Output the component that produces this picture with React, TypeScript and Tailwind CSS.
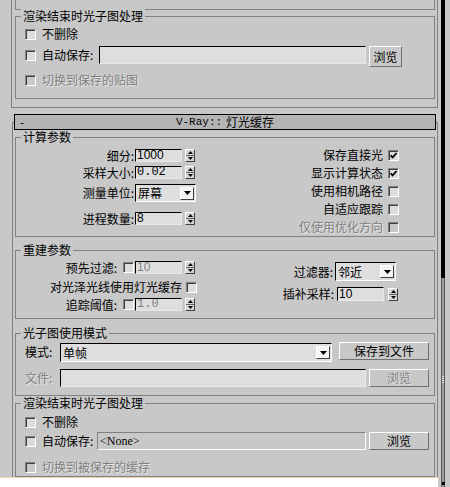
import React from "react";

const DIS = "text-[#808080] [text-shadow:1px_1px_0_#e6e6e6]";

function Check({ checked = false, disabled = false }: { checked?: boolean; disabled?: boolean }) {
  return (
    <div
      className={
        "w-[11px] h-[11px] shrink-0 border border-t-[#808080] border-l-[#808080] border-b-white border-r-white shadow-[inset_1px_1px_0_#404040] flex items-center justify-center " +
        (disabled ? "bg-[#c8c8c8]" : "bg-[#dcdcdc]")
      }
    >
      {checked && (
        <svg width="9" height="9" viewBox="0 0 9 9" className="block">
          <path d="M1.6 4.2 L3.6 6.4 L7.6 2" stroke="#000" strokeWidth="1.7" fill="none" />
        </svg>
      )}
    </div>
  );
}

function Spin() {
  return (
    <div className="w-[10px] h-[13px] shrink-0 flex flex-col border border-t-white border-l-white border-b-[#404040] border-r-[#404040] bg-[#d6d6d6]">
      <div className="h-[5px] flex items-center justify-center">
        <svg width="5" height="3" viewBox="0 0 5 3" className="block">
          <path d="M2.5 0L5 3H0Z" fill="#000" />
        </svg>
      </div>
      <div className="h-px bg-[#606060]" />
      <div className="h-[5px] flex items-center justify-center">
        <svg width="5" height="3" viewBox="0 0 5 3" className="block">
          <path d="M0 0H5L2.5 3Z" fill="#000" />
        </svg>
      </div>
    </div>
  );
}

function Field({ className = "", disabled = false, children }: { className?: string; disabled?: boolean; children?: React.ReactNode }) {
  return (
    <div
      className={
        "shrink-0 flex items-center overflow-hidden border border-t-black border-l-black border-b-[#e8e8e8] border-r-[#e8e8e8] bg-[#dedede] pl-[1px] " +
        className +
        (disabled ? " text-[#808080]" : "")
      }
    >
      {children}
    </div>
  );
}

function Num({ children, mono = false }: { children: React.ReactNode; mono?: boolean }) {
  return (
    <span
      className={
        "leading-[11px] " +
        (mono ? "[font-family:'Liberation_Mono',monospace]" : "[font-family:'Liberation_Sans',Arial,sans-serif]")
      }
    >
      {children}
    </span>
  );
}

function Combo({ className = "", text }: { className?: string; text: string }) {
  return (
    <div
      className={
        "shrink-0 flex items-center border border-t-black border-l-black border-b-white border-r-white bg-[#dedede] pl-[2px] pr-[1px] " +
        className
      }
    >
      <span className="flex-1 leading-[14px]">{text}</span>
      <div className="w-[14px] h-[13px] shrink-0 flex items-center justify-center bg-[#f4f4f4] border border-t-white border-l-white border-b-[#404040] border-r-[#404040]">
        <svg width="7" height="4" viewBox="0 0 7 4" className="block">
          <path d="M0 0H7L3.5 4Z" fill="#000" />
        </svg>
      </div>
    </div>
  );
}

function Btn({ className = "", disabled = false, children }: { className?: string; disabled?: boolean; children: React.ReactNode }) {
  return (
    <div
      className={
        "shrink-0 flex items-center justify-center border border-t-white border-l-white border-b-[#707070] border-r-[#707070] leading-[14px] " +
        className +
        (disabled ? " text-[#808080] [text-shadow:1px_1px_0_#e6e6e6]" : "")
      }
    >
      {children}
    </div>
  );
}

function Group({ title, className = "", children }: { title: string; className?: string; children?: React.ReactNode }) {
  return (
    <div className={"relative w-[420px] shrink-0 border border-[#808080] " + className}>
      <span className="absolute left-[5px] top-[-8px] px-[2px] bg-[#c8c8c8] leading-[14px] whitespace-nowrap">{title}</span>
      {children}
    </div>
  );
}

function RCheck({ label, checked = false, disabled = false, className = "" }: { label: string; checked?: boolean; disabled?: boolean; className?: string }) {
  return (
    <div className={"h-[14px] flex items-center " + className}>
      <span className={disabled ? DIS : ""}>{label}</span>
      <div className="ml-[5px]">
        <Check checked={checked} disabled={disabled} />
      </div>
    </div>
  );
}

export default function App() {
  return (
    <div className="flex w-[450px] h-[487px] overflow-hidden bg-[#c8c8c8] text-[12px] leading-[14px] text-black [font-family:'Noto_Sans_CJK_SC','Noto_Sans',sans-serif]">
      <div className="flex flex-col w-[438px] shrink-0">
        <div className="h-[477px] overflow-hidden flex flex-col shrink-0">
          {/* upper rollout (cut off) */}
          <div className="ml-[11px] w-[427px] h-[108px] shrink-0 flex flex-col border-x border-b border-[#808080]">
            <div className="ml-[3px] w-[420px] h-[10px] shrink-0 border-x border-b border-[#808080]" />
            <Group title="渲染结束时光子图处理" className="ml-[3px] mt-[6px] h-[83px]">
              <div className="pl-[9px] pt-[10px] flex flex-col">
                <div className="h-[14px] flex items-center">
                  <Check />
                  <span className="ml-[6px]">不删除</span>
                </div>
                <div className="mt-[5px] h-[21px] flex items-start">
                  <div className="mt-[4px]">
                    <Check />
                  </div>
                  <span className="ml-[6px] mt-[2px] w-[57px] shrink-0">自动保存:</span>
                  <Field className="w-[267px] h-[18px]" />
                  <Btn className="ml-[3px] w-[33px] h-[21px]">浏览</Btn>
                </div>
                <div className="mt-[6px] h-[14px] flex items-center">
                  <Check disabled />
                  <span className={"ml-[6px] " + DIS}>切换到保存的贴图</span>
                </div>
              </div>
            </Group>
          </div>

          {/* V-Ray title bar */}
          <div className="relative z-10 mt-[6px] ml-[14px] w-[422px] h-[16px] shrink-0 border border-black bg-[#b4b4b4] flex items-center justify-center">
            <span className="absolute left-[5px] top-0 leading-[14px]">-</span>
            <span className="text-[11px] leading-[14px] [font-family:'Liberation_Mono',monospace]">V-Ray::</span>
            <span className="ml-[4px] leading-[14px]">灯光缓存</span>
          </div>

          {/* rollout frame */}
          <div className="-mt-[8px] ml-[12px] w-[426px] h-[400px] shrink-0 flex flex-col border-x border-t border-[#808080]">
            {/* 计算参数 */}
            <Group title="计算参数" className="ml-[2px] mt-[14px] h-[100px]">
              <div className="flex">
                <div className="w-[180px] shrink-0 pt-[11px] flex flex-col">
                  <div className="h-[13px] flex items-center">
                    <span className="w-[118px] shrink-0 text-right">细分:</span>
                    <Field className="ml-[1px] w-[47px] h-[13px]">
                      <Num>1000</Num>
                    </Field>
                    <div className="ml-[3px]">
                      <Spin />
                    </div>
                  </div>
                  <div className="mt-[4px] h-[13px] flex items-center">
                    <span className="w-[118px] shrink-0 text-right">采样大小:</span>
                    <Field className="ml-[1px] w-[47px] h-[13px]">
                      <Num mono>0.02</Num>
                    </Field>
                    <div className="ml-[3px]">
                      <Spin />
                    </div>
                  </div>
                  <div className="mt-[5px] h-[18px] flex items-center">
                    <span className="w-[118px] shrink-0 text-right">测量单位:</span>
                    <Combo className="ml-[1px] w-[61px] h-[18px]" text="屏幕" />
                  </div>
                  <div className="mt-[10px] h-[13px] flex items-center">
                    <span className="w-[118px] shrink-0 text-right">进程数量:</span>
                    <Field className="ml-[1px] w-[47px] h-[13px]">
                      <Num>8</Num>
                    </Field>
                    <div className="ml-[3px]">
                      <Spin />
                    </div>
                  </div>
                </div>
                <div className="flex-1 pt-[10px] pr-[35px] flex flex-col items-end">
                  <RCheck label="保存直接光" checked />
                  <RCheck label="显示计算状态" checked className="mt-[4px]" />
                  <RCheck label="使用相机路径" className="mt-[4px]" />
                  <RCheck label="自适应跟踪" className="mt-[4px]" />
                  <RCheck label="仅使用优化方向" disabled className="mt-[4px]" />
                </div>
              </div>
            </Group>

            {/* 重建参数 */}
            <Group title="重建参数" className="ml-[2px] mt-[13px] h-[69px]">
              <div className="flex">
                <div className="w-[182px] shrink-0 pt-[10px] flex flex-col">
                  <div className="h-[13px] flex items-center">
                    <span className="w-[101px] shrink-0 text-right">预先过滤:</span>
                    <div className="ml-[6px]">
                      <Check />
                    </div>
                    <Field className="ml-[1px] w-[47px] h-[13px]" disabled>
                      <Num>10</Num>
                    </Field>
                    <div className="ml-[3px]">
                      <Spin />
                    </div>
                  </div>
                  <div className="mt-[6px] h-[14px] flex items-center">
                    <span className="w-[166px] shrink-0 text-right">对光泽光线使用灯光缓存</span>
                    <div className="ml-[4px]">
                      <Check />
                    </div>
                  </div>
                  <div className="mt-[4px] h-[13px] flex items-center">
                    <span className="w-[101px] shrink-0 text-right">追踪阈值:</span>
                    <div className="ml-[6px]">
                      <Check />
                    </div>
                    <Field className="ml-[1px] w-[47px] h-[13px]" disabled>
                      <Num mono>1.0</Num>
                    </Field>
                    <div className="ml-[3px]">
                      <Spin />
                    </div>
                  </div>
                </div>
                <div className="flex-1 pt-[11px] flex flex-col items-end">
                  <div className="mr-[38px] h-[19px] flex items-center">
                    <span>过滤器:</span>
                    <Combo className="ml-[2px] w-[61px] h-[19px]" text="邻近" />
                  </div>
                  <div className="mr-[36px] mt-[6px] h-[14px] flex items-center">
                    <span>插补采样:</span>
                    <Field className="ml-[3px] w-[47px] h-[14px]">
                      <Num>10</Num>
                    </Field>
                    <div className="ml-[4px]">
                      <Spin />
                    </div>
                  </div>
                </div>
              </div>
            </Group>

            {/* 光子图使用模式 */}
            <Group title="光子图使用模式" className="ml-[2px] mt-[14px] h-[63px]">
              <div className="pl-[9px] pt-[8px] flex flex-col">
                <div className="h-[20px] flex items-start">
                  <span className="w-[35px] h-[19px] shrink-0 flex items-center">模式:</span>
                  <Combo className="mt-[1px] w-[272px] h-[19px]" text="单帧" />
                  <Btn className="ml-[7px] w-[90px] h-[18px]">保存到文件</Btn>
                </div>
                <div className="mt-[7px] h-[18px] flex items-center">
                  <span className={"w-[35px] shrink-0 " + DIS}>文件:</span>
                  <Field className="w-[306px] h-[18px]" />
                  <Btn disabled className="ml-[3px] w-[60px] h-[18px]">
                    浏览
                  </Btn>
                </div>
              </div>
            </Group>

            {/* 渲染结束时光子图处理 */}
            <Group title="渲染结束时光子图处理" className="ml-[2px] mt-[7px] h-[74px]">
              <div className="pl-[9px] pt-[11px] flex flex-col">
                <div className="h-[14px] flex items-center">
                  <Check />
                  <span className="ml-[6px]">不删除</span>
                </div>
                <div className="mt-[3px] h-[18px] flex items-center">
                  <Check />
                  <span className="ml-[6px] w-[55px] shrink-0">自动保存:</span>
                  <div className="w-[269px] h-[18px] shrink-0 flex items-center pl-[2px] border border-t-[#808080] border-l-[#808080] border-b-white border-r-white [font-family:'Liberation_Serif',serif]">
                    &lt;None&gt;
                  </div>
                  <Btn className="ml-[3px] w-[60px] h-[18px]">浏览</Btn>
                </div>
                <div className="mt-[10px] h-[14px] flex items-center">
                  <Check disabled />
                  <span className={"ml-[6px] " + DIS}>切换到被保存的缓存</span>
                </div>
              </div>
            </Group>
          </div>
        </div>
        <div className="h-[10px] shrink-0 bg-white border-t border-[#f0d2ae]" />
      </div>

      {/* scrollbar */}
      <div className="w-[12px] h-[487px] shrink-0 flex">
        <div className="w-[3px] shrink-0" />
        <div className="w-[4px] shrink-0 flex flex-col">
          <div className="h-[278px] shrink-0 bg-black" />
          <div className="relative flex-1 flex">
            <div className="w-px bg-[#5a5a5a]" />
            <div className="w-[2px] bg-[#9a9a9a]" />
            <div className="w-px bg-[#5a5a5a]" />
            <div className="absolute left-[1px] top-[98px] w-[2px] h-[7px] flex flex-col justify-between">
              <div className="h-px bg-[#e0e0e0]" />
              <div className="h-px bg-[#e0e0e0]" />
              <div className="h-px bg-[#e0e0e0]" />
              <div className="h-px bg-[#e0e0e0]" />
            </div>
            <div className="absolute left-[1px] bottom-[2px] w-[3px] h-[3px] bg-black" />
          </div>
        </div>
        <div className="flex-1" />
      </div>
    </div>
  );
}
